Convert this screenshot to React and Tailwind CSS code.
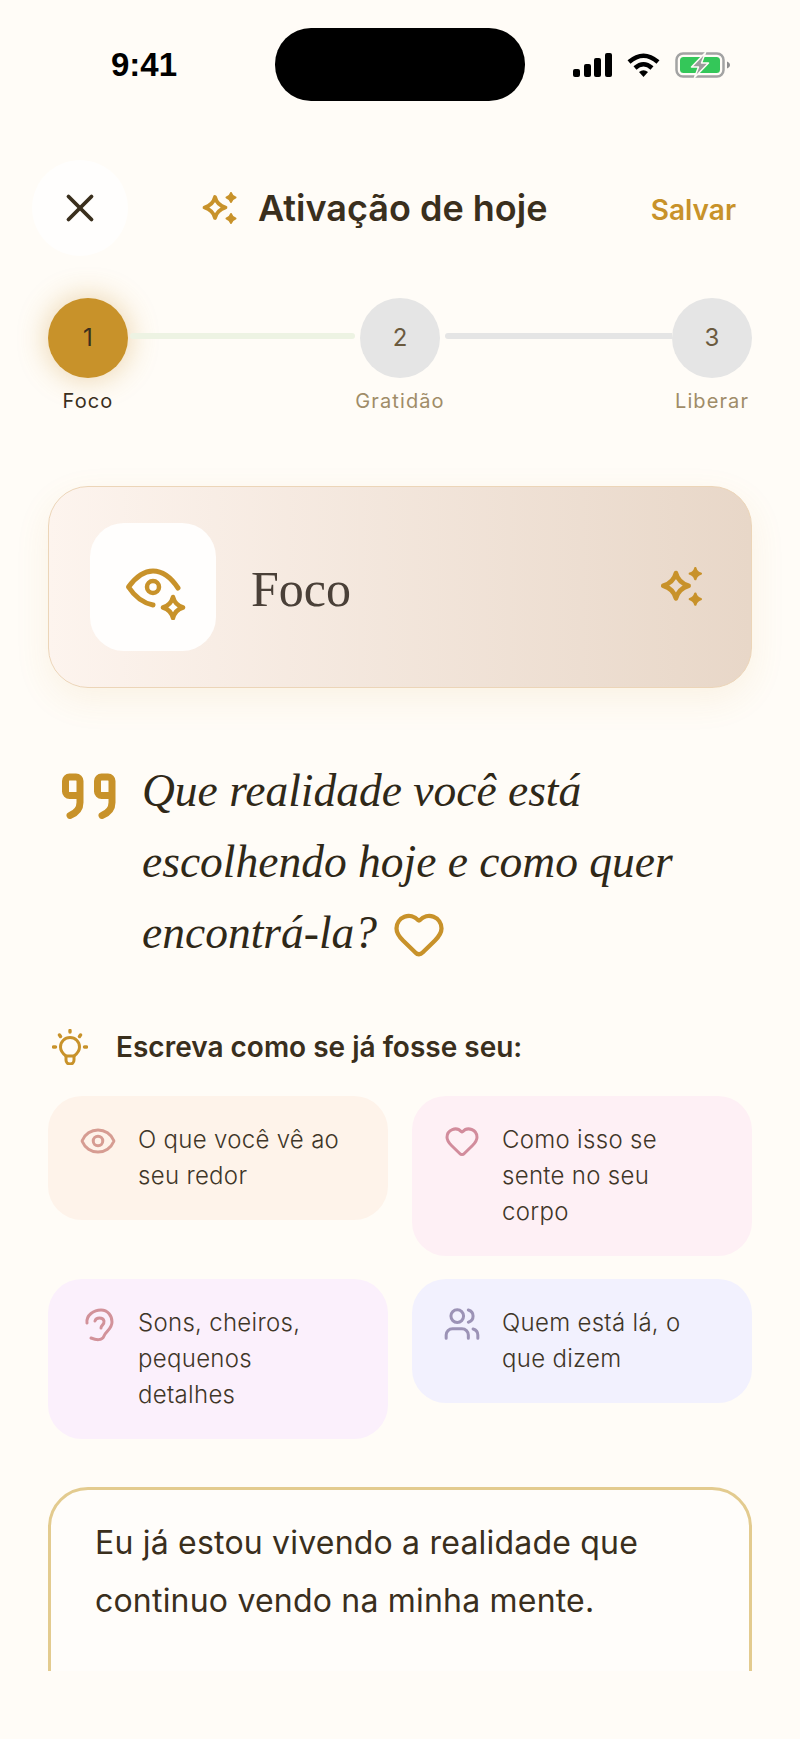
import { Eye, Heart, Users, X } from "lucide-react"

const GOLD = "#c8922a"

const Sparkles = ({ className }) => (
  <svg viewBox="0 0 36 33" className={className} fill={GOLD} stroke={GOLD} strokeLinejoin="round">
    <path d="M13 5 Q15 13 23.5 15.5 Q15 18 13 26 Q11 18 2.5 15.5 Q11 13 13 5Z" fill="none" strokeWidth="3.8" />
    <path d="M29 1 Q30 4.5 33.5 5.5 Q30 6.5 29 10 Q28 6.5 24.5 5.5 Q28 4.5 29 1Z" strokeWidth="2" />
    <path d="M29 22 Q30 25.5 33.5 26.5 Q30 27.5 29 31 Q28 27.5 24.5 26.5 Q28 25.5 29 22Z" strokeWidth="2" />
  </svg>
)

const EyeStar = () => (
  <svg viewBox="120 554 66 66" className="h-[66px] w-[66px]" fill="none" stroke={GOLD} strokeLinecap="round" strokeLinejoin="round">
    <path d="M178 588 C170 576 162 571 153 571 C143 571 135 578 128.5 587 C135 597 143 603 153 605" strokeWidth="5" />
    <circle cx="153" cy="587" r="6" strokeWidth="4.5" />
    <path d="M173 597 Q175 605 183 607.5 Q175 610 173 618 Q171 610 163 607.5 Q171 605 173 597Z" strokeWidth="4.5" />
  </svg>
)

const QuoteMark = () => (
  <svg viewBox="0 0 54 46" className="h-[47px] w-[54px] shrink-0" fill="none" stroke={GOLD} strokeWidth="7" strokeLinecap="round" strokeLinejoin="round">
    <path d="M18 22 H7.5 a4 4 0 0 1-4-4 V7.5 a4 4 0 0 1 4-4 H14 a4 4 0 0 1 4 4 V29 C18 36 13 40 8 42" />
    <path d="M50 22 H39.5 a4 4 0 0 1-4-4 V7.5 a4 4 0 0 1 4-4 H46 a4 4 0 0 1 4 4 V29 C50 36 45 40 40 42" />
  </svg>
)

const Bulb = () => (
  <svg viewBox="52 1029 36 36" className="h-9 w-9 shrink-0" fill="none" stroke={GOLD} strokeLinecap="round" strokeLinejoin="round">
    <path d="M66 1056 C62 1053 60.5 1050 60.5 1047 A9.5 9.5 0 0 1 79.5 1047 C79.5 1050 78 1053 74 1056 Z" strokeWidth="3" />
    <path d="M66 1056 V1060 A4 4 0 0 0 74 1060 V1056" strokeWidth="3" />
    <path d="M70 1030.5 V1032 M59.5 1035 L60.5 1036.5 M80.5 1035 L79.5 1036.5 M53.5 1047 H55.5 M84.5 1047 H86.5" strokeWidth="3.4" />
  </svg>
)

// lucide's Ear has a longer inner curl than the one in the design
const EarIcon = ({ className }) => (
  <svg viewBox="79 1305 38 38" className={className} fill="none" stroke="currentColor" strokeWidth="3" strokeLinecap="round" strokeLinejoin="round">
    <path d="M87 1323 C86 1315 94 1310 101 1310 C108 1310 112 1316 112 1322 C112 1329 106 1331 104 1336 C102 1341 96 1340 91 1338" />
    <path d="M95 1321 C96 1317 103 1317 104 1321 C104.5 1325 101 1325 101 1328" />
  </svg>
)

const Wifi = () => (
  <svg viewBox="0 0 33 24" className="h-6 w-[33px]" fill="none" stroke="#000">
    <path d="M2 9 Q16.5 -3.5 31 9" strokeWidth="4.5" />
    <path d="M8 15 Q16.5 7.5 25 15" strokeWidth="4.5" />
    <path d="M12 19 Q16.5 15.5 21 19 L16.5 24 Z" fill="#000" stroke="none" />
  </svg>
)

const Battery = () => (
  <svg viewBox="0 0 55 26" className="h-[26px] w-[55px]">
    <rect x="1.5" y="1.5" width="47" height="23" rx="6.5" fill="none" stroke="#a3a3a3" strokeWidth="2.5" />
    <rect x="5" y="5" width="40" height="16" rx="3.5" fill="#34c759" />
    <path d="M52 9.5 C54 10.5 55 11.5 55 13 C55 14.5 54 15.5 52 16.5 Z" fill="#8e8e8e" />
    <path d="M30.5 0.5 L16.5 15 H23.5 L19.5 25.5 L33.5 11 H26.5 Z" fill="#9c9c9c" stroke="#fffcf7" strokeWidth="1.5" strokeLinejoin="round" />
  </svg>
)

const steps = [
  { n: 1, label: "Foco", active: true },
  { n: 2, label: "Gratidão" },
  { n: 3, label: "Liberar" },
]

const Step = ({ n, label, active }) => (
  <div className="flex w-20 shrink-0 flex-col items-center">
    <div
      className={
        active
          ? "flex h-20 w-20 items-center justify-center rounded-full bg-[#c8922a] text-2xl text-[#3a2f1d] shadow-[0_0_30px_rgba(200,146,42,0.4)]"
          : "flex h-20 w-20 items-center justify-center rounded-full bg-[#e5e5e5] text-2xl text-[#6b5a3e]"
      }
    >
      {n}
    </div>
    <span
      className={
        active
          ? "mt-[9px] whitespace-nowrap text-[20px] leading-7 tracking-[1.1px] text-[#3a2f1d]"
          : "mt-[9px] whitespace-nowrap text-[20px] leading-7 tracking-[1.1px] text-[#a08c68]"
      }
    >
      {label}
    </span>
  </div>
)

const TipCard = ({ icon, bg, children }) => (
  <div className={`flex items-start gap-[21px] self-start rounded-[34px] py-[26px] pl-[31px] pr-[34px] ${bg}`}>
    <div className="flex h-[38px] w-[38px] shrink-0 items-center justify-center">{icon}</div>
    <p className="text-[24px] font-light leading-9 tracking-[0.3px] text-[#3f3628]">{children}</p>
  </div>
)

export default function App() {
  return (
    <div className="h-[1739px] overflow-hidden bg-[#fffcf7] [font-family:Inter,sans-serif]">
      <div className="h-[1671px] overflow-hidden">
        <div className="flex items-center pt-[28px]">
          <span className="ml-[111px] w-[164px] text-[33px] font-bold leading-[73px] text-black [font-family:'Liberation_Sans',sans-serif]">9:41</span>
          <div className="h-[73px] w-[250px] rounded-[36px] bg-black" />
          <div className="ml-[48px] flex items-center">
            <div className="flex h-6 items-end gap-[3.5px]">
              <span className="h-2 w-[7px] rounded-[2px] bg-black" />
              <span className="h-[13px] w-[7px] rounded-[2px] bg-black" />
              <span className="h-[19px] w-[7px] rounded-[2px] bg-black" />
              <span className="h-6 w-[7px] rounded-[2px] bg-black" />
            </div>
            <div className="ml-[15px]">
              <Wifi />
            </div>
            <div className="ml-[15px]">
              <Battery />
            </div>
          </div>
        </div>

        <div className="mt-[59px] flex items-center pl-8 pr-[64px]">
          <button className="flex h-24 w-24 items-center justify-center rounded-full bg-white/70 text-[#3a2f1d]">
            <X size={46} strokeWidth={2} />
          </button>
          <Sparkles className="ml-[74px] h-[33px] w-9" />
          <h1 className="ml-[20px] text-[36px] font-semibold leading-10 text-[#3a2f1d]">Ativação de hoje</h1>
          <span className="ml-auto mt-1 text-[28px] font-semibold leading-8 text-[#c8922a]">Salvar</span>
        </div>

        <div className="mt-[42px] flex px-12">
          <Step {...steps[0]} />
          <div className="ml-[2px] mr-[5px] mt-[35px] h-[6px] w-[225px] rounded-full bg-[#edf3e3]" />
          <Step {...steps[1]} />
          <div className="ml-[5px] mt-[35px] h-[6px] flex-1 rounded-l-full bg-[#e5e5e5]" />
          <Step {...steps[2]} />
        </div>

        <div className="mx-12 mt-[71px] flex h-[202px] items-center rounded-[40px] border border-[#ecd5b8] bg-gradient-to-r from-[#fdf4ee] to-[#e8d7c8] pl-[41px] pr-[47px] shadow-[0_12px_36px_rgba(200,146,42,0.09)]">
          <div className="flex h-[128px] w-[126px] items-center justify-center rounded-[34px] bg-[#fffefd]">
            <EyeStar />
          </div>
          <span className="ml-[35px] mt-1 text-[50px] leading-none text-[#4a4038] [font-family:'Liberation_Serif',serif]">Foco</span>
          <Sparkles className="ml-auto h-10 w-11" />
        </div>

        <div className="mt-[67px] flex pl-[62px] pr-[40px]">
          <div className="pt-[18px]">
            <QuoteMark />
          </div>
          <p className="ml-[26px] text-[45.5px] italic leading-[71px] text-[#2f2818] [font-family:'Liberation_Serif',serif]">
            Que realidade você está escolhendo hoje e como quer encontrá-la?
            <Heart size={54} strokeWidth={1.9} className="ml-[15px] inline-block align-[-13px] text-[#c8922a]" />
          </p>
        </div>

        <div className="mt-[61px] flex items-center pl-[52px]">
          <Bulb />
          <h2 className="ml-[28px] text-[28px] font-semibold leading-9 text-[#3a2f1d]">Escreva como se já fosse seu:</h2>
        </div>

        <div className="mx-12 mt-[31px] grid grid-cols-2 gap-x-6 gap-y-[23px]">
          <TipCard icon={<Eye size={38} strokeWidth={1.9} className="text-[#d69c92]" />} bg="bg-[#fef3ea]">
            O que você vê ao seu redor
          </TipCard>
          <TipCard icon={<Heart size={36} strokeWidth={2} className="text-[#d28c9c]" />} bg="bg-[#fef0f5]">
            Como isso se sente no seu corpo
          </TipCard>
          <TipCard icon={<EarIcon className="h-[38px] w-[38px] text-[#d2929a]" />} bg="bg-[#fbf0fc]">
            Sons, cheiros, pequenos detalhes
          </TipCard>
          <TipCard icon={<Users size={38} strokeWidth={1.9} className="text-[#9c93b6]" />} bg="bg-[#f2f1fe]">
            Quem está lá, o que dizem
          </TipCard>
        </div>

        <div className="mx-12 mt-[48px] h-[300px] rounded-[40px] border-[3px] border-[#e3cb8f] bg-[#fffdfa] px-[44px] pt-[24px]">
          <p className="text-[32px] leading-[58px] tracking-[0.2px] text-[#3a2f1d]">
            Eu já estou vivendo a realidade que continuo vendo na minha mente.
          </p>
        </div>
      </div>
    </div>
  )
}
